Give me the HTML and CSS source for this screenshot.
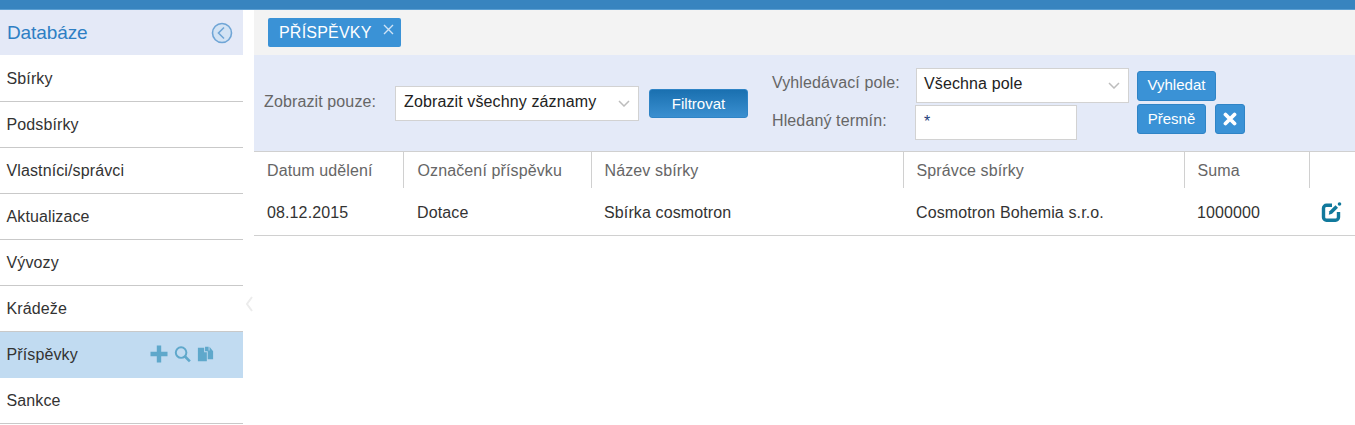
FILE: index.html
```html
<!DOCTYPE html>
<html lang="cs">
<head>
  <meta charset="UTF-8">
  <title>Databáze - Příspěvky</title>
  <link rel="stylesheet" href="styles.css">
</head>
<body>
  <div class="top-bar"></div>
  <div class="layout">
    <aside class="sidebar">
      <div class="sidebar-head">
        <span class="sidebar-title">Databáze</span>
        <svg class="collapse-icon" width="22" height="22" viewBox="0 0 22 22">
          <circle cx="11" cy="11" r="9.5" fill="#d3e3f4" stroke="#6fa5d6" stroke-width="1.6"/>
          <path d="M13 5.5 L7.5 11 L13 16.5" fill="none" stroke="#6fa5d6" stroke-width="1.6"/>
        </svg>
      </div>
      <ul class="side-menu">
        <li>Sbírky</li>
        <li>Podsbírky</li>
        <li>Vlastníci/správci</li>
        <li>Aktualizace</li>
        <li>Vývozy</li>
        <li>Krádeže</li>
        <li class="active">
          <span>Příspěvky</span>
          <span class="item-tools">
            <svg width="18" height="18" viewBox="0 0 18 18"><path d="M6.800 .5h4.400v6.300h6.300v4.400h-6.300v6.300H6.800v-6.300H.5V6.800h6.300z" fill="#5fa8cb"/></svg>
            <svg width="17" height="18" viewBox="0 0 18 18"><circle cx="7.500" cy="7.500" r="5.600" fill="none" stroke="#5fa8cb" stroke-width="2.100"/><path d="M11.400 11.400 L16.800 16.800" stroke="#5fa8cb" stroke-width="2.800"/></svg>
            <svg width="17" height="18" viewBox="0 0 19 18"><path d="M1 2h7v5h3v10H1z" fill="#5fa8cb"/><path d="M9 1h4v4h1V1l4 5v9h-6V6H9z" fill="#5fa8cb"/></svg>
          </span>
        </li>
        <li>Sankce</li>
      </ul>
    </aside>
    <div class="splitter">
      <svg width="8" height="16" viewBox="0 0 8 16"><path d="M7 1 L2 8 L7 15" fill="none" stroke="#ececec" stroke-width="2"/></svg>
    </div>
    <main class="content">
      <div class="tab-bar">
        <div class="tab">
          <span>PŘÍSPĚVKY</span>
          <svg class="tab-close" width="11" height="11" viewBox="0 0 11 11"><path d="M1 1 L10 10 M10 1 L1 10" stroke="#cfe3f5" stroke-width="1.4"/></svg>
        </div>
      </div>
      <div class="filter-panel">
        <div class="filter-group">
          <label class="filter-label label-show">Zobrazit pouze:</label>
          <div class="select select-show">
            <span>Zobrazit všechny záznamy</span>
            <svg width="12" height="7" viewBox="0 0 12 7"><path d="M1 1 L6 6 L11 1" fill="none" stroke="#bdbdbd" stroke-width="1.5"/></svg>
          </div>
          <button class="btn btn-filter">Filtrovat</button>
        </div>
        <div class="search-labels">
          <label class="filter-label">Vyhledávací pole:</label>
          <label class="filter-label">Hledaný termín:</label>
        </div>
        <div class="search-fields">
          <div class="select select-field">
            <span>Všechna pole</span>
            <svg width="12" height="7" viewBox="0 0 12 7"><path d="M1 1 L6 6 L11 1" fill="none" stroke="#bdbdbd" stroke-width="1.5"/></svg>
          </div>
          <div class="text-input">*</div>
        </div>
        <div class="search-buttons">
          <button class="btn btn-search">Vyhledat</button>
          <div class="btn-row">
            <button class="btn btn-exact">Přesně</button>
            <button class="btn btn-clear">
              <svg width="14" height="14" viewBox="0 0 14 14"><path d="M2.500 2.500 L11.500 11.500 M11.500 2.500 L2.500 11.500" stroke="#fff" stroke-width="3.800" stroke-linecap="round"/></svg>
            </button>
          </div>
        </div>
      </div>
      <table class="grid">
        <colgroup>
          <col class="col-date"><col class="col-mark"><col class="col-name"><col class="col-admin"><col class="col-sum"><col>
        </colgroup>
        <thead>
          <tr>
            <th>Datum udělení</th>
            <th>Označení příspěvku</th>
            <th>Název sbírky</th>
            <th>Správce sbírky</th>
            <th>Suma</th>
            <th></th>
          </tr>
        </thead>
        <tbody>
          <tr>
            <td>08.12.2015</td>
            <td>Dotace</td>
            <td>Sbírka cosmotron</td>
            <td>Cosmotron Bohemia s.r.o.</td>
            <td>1000000</td>
            <td class="cell-edit">
              <svg width="21" height="21" viewBox="0 0 21 21">
                <path d="M11 4.200H5.500a3 3 0 0 0-3 3v9a3 3 0 0 0 3 3h9a3 3 0 0 0 3-3V11" fill="none" stroke="#11799c" stroke-width="3.400"/>
                <path d="M7.800 13.800 L8.400 10.300 L14.500 4.300 L17 6.800 L11 12.800 Z" fill="#11799c"/>
                <circle cx="18.500" cy="3" r="1.800" fill="#11799c"/>
              </svg>
            </td>
          </tr>
        </tbody>
      </table>
    </main>
  </div>
</body>
</html>
```

FILE: styles.css
```css
* {
  box-sizing: border-box;
}

html, body {
  height: 100%;
}

body {
  margin: 0;
  background: #fff;
  color: #333;
  font-family: "Liberation Sans", Arial, sans-serif;
  font-size: 16px;
  letter-spacing: .12px;
  overflow: hidden;
}

.top-bar {
  height: 10px;
  background: #3884bf;
  border-bottom: 1px solid #5c9fd2;
}

.layout {
  display: flex;
}

/* sidebar */
.sidebar {
  width: 243px;
  flex: none;
}

.sidebar-head {
  height: 45px;
  padding: 0 10px 0 7px;
  display: flex;
  align-items: center;
  justify-content: space-between;
  background: #e4e9f7;
}

.sidebar-title {
  font-size: 19px;
  letter-spacing: -.1px;
  color: #2e7fc4;
}

.side-menu {
  list-style: none;
  margin: 0;
  padding: 1px 0 0;
}

.side-menu li {
  height: 46px;
  padding-left: 6.500px;
  display: flex;
  align-items: center;
  border-bottom: 1px solid #c9c9c9;
}

.side-menu li.active {
  background: #c1dbf1;
  border-bottom: 0;
}

.item-tools {
  display: flex;
  gap: 6px;
  margin-left: 72px;
  margin-top: -3px;
}

.splitter {
  width: 11px;
  flex: none;
  padding: 286px 0 0 2px;
}

/* tabs */
.content {
  flex: 1;
  min-width: 0;
}

.tab-bar {
  height: 45px;
  padding: 8px 14px 0;
  background: #f3f3f3;
}

.tab {
  position: relative;
  width: 133px;
  height: 29px;
  padding-left: 11px;
  display: flex;
  align-items: center;
  background: #3a92d6;
  border-radius: 2px;
  color: #fff;
  font-size: 16px;
  letter-spacing: .2px;
}

.tab-close {
  position: absolute;
  top: 6px;
  right: 7px;
}

/* filter */
.filter-panel {
  height: 97px;
  padding-left: 10px;
  display: flex;
  background: #e4eaf8;
  border-bottom: 1px solid #d0d0d0;
}

.filter-group {
  display: flex;
  align-items: center;
  padding-top: 1px;
}

.filter-label {
  color: #666;
  font-size: 16px;
}

.label-show {
  width: 131px;
  margin-bottom: 4px;
}

.select {
  display: flex;
  align-items: center;
  justify-content: space-between;
  height: 35px;
  background: #fff;
  border: 1px solid #d2d2d2;
  color: #222;
}

.select span {
  margin-bottom: 4px;
}

.select-show {
  width: 244px;
  padding: 0 8px;
}

.select-field {
  width: 213px;
  padding: 0 8px 0 7px;
  margin-left: 1px;
}

.btn {
  border: 1px solid #2f84c6;
  border-radius: 3px;
  background: #3a92d6;
  color: #fff;
  font-family: inherit;
  font-size: 15px;
  padding: 0;
}

.btn-filter {
  width: 99px;
  height: 29px;
  margin-left: 10px;
  background: linear-gradient(#1a70b0, #3a8fd0);
}

.search-labels {
  display: flex;
  flex-direction: column;
  gap: 20px;
  margin-left: 24px;
  padding-top: 19px;
  width: 143px;
}

.search-fields {
  display: flex;
  flex-direction: column;
  gap: 2px;
  padding-top: 13px;
}

.text-input {
  width: 162px;
  height: 35px;
  padding: 7px 8px;
  background: #fff;
  border: 1px solid #d2d2d2;
  color: #1f3f7a;
}

.search-buttons {
  display: flex;
  flex-direction: column;
  gap: 3px;
  margin-left: 8px;
  padding-top: 16px;
}

.btn-row {
  display: flex;
  gap: 9px;
}

.btn-search {
  width: 79px;
  height: 30px;
  padding-bottom: 3px;
}

.btn-exact {
  width: 69px;
  height: 30px;
  padding-bottom: 2px;
}

.btn-clear {
  width: 30px;
  height: 30px;
  display: flex;
  align-items: center;
  justify-content: center;
}

/* table */
.grid {
  width: 100%;
  table-layout: fixed;
  border-collapse: collapse;
}

.col-date { width: 149px; }
.col-mark { width: 188px; }
.col-name { width: 312px; }
.col-admin { width: 281px; }
.col-sum { width: 125px; }

.grid th {
  height: 36px;
  padding: 2px 0 0 13px;
  text-align: left;
  font-weight: normal;
  color: #666;
  border-right: 1px solid #d0d0d0;
}

.grid th:last-child {
  border-right: 0;
}

.grid td {
  height: 47px;
  padding: 3px 0 0 13px;
  color: #333;
  border-bottom: 1px solid #d0d0d0;
}

.grid th:nth-child(2),
.grid td:nth-child(2) {
  padding-left: 14px;
}

.cell-edit svg {
  display: block;
  margin: -3px 0 0 -1px;
}
```
